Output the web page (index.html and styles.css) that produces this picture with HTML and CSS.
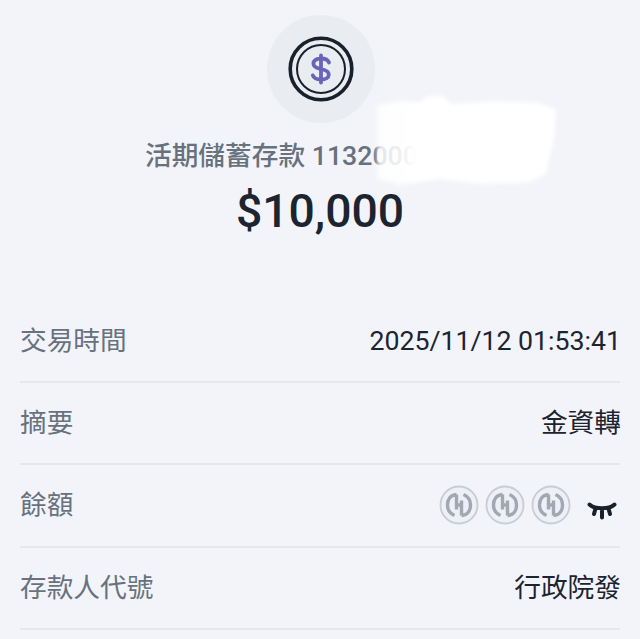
FILE: index.html
```html
<!DOCTYPE html>
<html lang="zh-Hant">
<head>
<meta charset="utf-8">
<title>交易明細</title>
<link rel="stylesheet" href="styles.css">
</head>
<body>
<main class="page">
  <header class="summary">
    <div class="badge">
      <svg class="coin" viewBox="0 0 66 66" width="66" height="66" aria-hidden="true">
        <circle cx="33" cy="33" r="30.800" fill="none" stroke="#18202c" stroke-width="3.600"/>
        <circle cx="33" cy="33" r="24" fill="none" stroke="#18202c" stroke-width="2"/>
        <path d="M41 26.500c-1-2.600-4-4-8-4-4.600 0-7.600 2-7.600 5.200 0 3.200 3 4.400 7.600 5.300 4.800 1 7.800 2.200 7.800 5.400 0 3.200-3.200 5.200-7.800 5.200-4.200 0-7.200-1.500-8.200-4.200M33 19.500v27" fill="none" stroke="#6a63b8" stroke-width="3.800" stroke-linecap="round"/>
      </svg>
    </div>
    <p class="account">活期儲蓄存款 1132000</p>
    <p class="amount">$10,000</p>
    <svg class="mask" viewBox="0 0 195 100" width="195" height="100" aria-hidden="true">
      <defs>
        <linearGradient id="mask-fade" gradientUnits="userSpaceOnUse" x1="3" y1="0" x2="46" y2="0">
          <stop offset="0" stop-color="#fff" stop-opacity="0.800"/>
          <stop offset="0.700" stop-color="#fff" stop-opacity="0.900"/>
          <stop offset="1" stop-color="#fff"/>
        </linearGradient>
      </defs>
      <path d="M7 15 30 11 50 12 58 6 72 6 82 14 125 11 170 13 186 20 184 48 176 84 160 92 112 94 70 89 30 95 7 89Z" fill="url(#mask-fade)"/>
    </svg>
  </header>
  <dl class="details">
    <div class="row"><dt>交易時間</dt><dd>2025/11/12 01:53:41</dd></div>
    <div class="row"><dt>摘要</dt><dd>金資轉</dd></div>
    <div class="row">
      <dt>餘額</dt>
      <dd class="hidden-balance">
        <svg class="token" viewBox="0 0 40 40" width="40" height="40" aria-hidden="true"><use href="#token"/></svg>
        <svg class="token" viewBox="0 0 40 40" width="40" height="40" aria-hidden="true"><use href="#token"/></svg>
        <svg class="token" viewBox="0 0 40 40" width="40" height="40" aria-hidden="true"><use href="#token"/></svg>
        <svg class="eye" viewBox="0 0 30 20" width="30" height="20" aria-hidden="true">
          <path d="M2.500 3.500C8 8.500 22 8.500 27.500 3.500M8.500 7.500 7 13M15 8.500V16.500M21.500 7.500 23 13" fill="none" stroke="#18202c" stroke-width="4" stroke-linecap="round"/>
        </svg>
      </dd>
    </div>
    <div class="row"><dt>存款人代號</dt><dd>行政院發</dd></div>
  </dl>
</main>
<svg class="defs" width="0" height="0" aria-hidden="true">
  <symbol id="token" viewBox="0 0 40 40">
    <circle cx="20" cy="20" r="18.500" fill="#eef0f7" stroke="#c9ccd3" stroke-width="1.800"/>
    <path d="M17.500 9.500C11 10 8.500 15 8.500 20S11 28.500 15.500 30.500M17.500 9.500V24.500M22.500 30.500C29 30 31.500 25 31.500 20S29 11.500 24.500 9.500M22.500 30.500V15.500M17.500 20H22.500" fill="none" stroke="#a2a7b2" stroke-width="3.400"/>
  </symbol>
</svg>
</body>
</html>
```

FILE: styles.css
```css
* { box-sizing: border-box; }
html, body { margin: 0; padding: 0; }
body {
  background: #f3f4f9;
  font-family: Roboto, "Noto Sans CJK TC", sans-serif;
  color: #1b2430;
  height: 639px;
  overflow: hidden;
}
.page { display: flex; flex-direction: column; }
.summary {
  position: relative;
  display: flex;
  flex-direction: column;
  align-items: center;
  padding-top: 15px;
  height: 300.500px;
}
.badge {
  width: 108px;
  height: 108px;
  margin-left: 2px;
  border-radius: 50%;
  background: #e9ecf1;
  display: flex;
  align-items: center;
  justify-content: center;
}
.account {
  margin: 14px 0 0;
  font-size: 26.700px;
  font-weight: 500;
  line-height: 38px;
  color: #67727e;
  width: 350px;
  white-space: nowrap;
}
.amount {
  margin: 9px 0 0;
  font-size: 46.300px;
  line-height: 54px;
  font-weight: 500;
}
.mask { position: absolute; left: 370px; top: 90px; filter: blur(2px); }
.details { margin: 0; padding: 0 20px; display: flex; flex-direction: column; }
.row {
  display: flex;
  justify-content: space-between;
  align-items: center;
  height: 82.400px;
  border-bottom: 2px solid #e5e7ec;
  font-size: 26.700px;
  line-height: 32px;
}
.row dt { color: #67727e; }
.row dd { margin: 0 -1px 0 0; color: #1b2430; }
.row .hidden-balance { margin-right: 0; display: flex; align-items: center; gap: 6px; }
.eye { margin: 12px 3px 0 10px; }
.defs { position: absolute; }
```
